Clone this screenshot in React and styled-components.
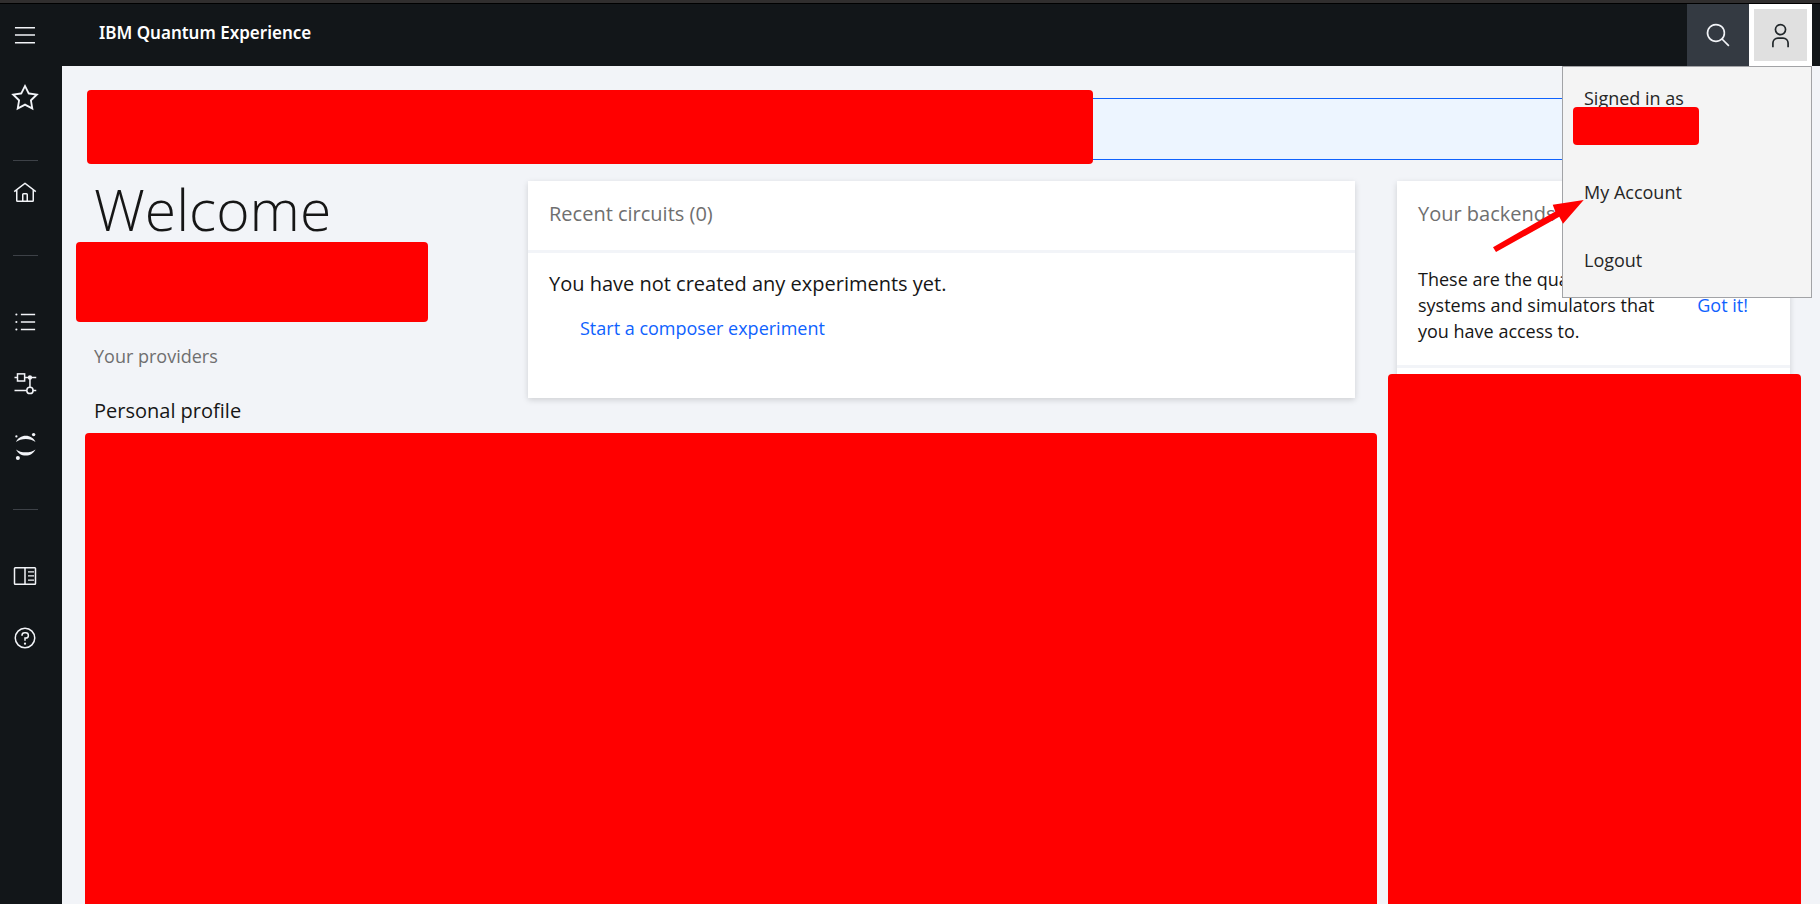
import React from 'react';
import styled, { createGlobalStyle } from 'styled-components';

const GlobalStyle = createGlobalStyle`
  *, *::before, *::after { box-sizing: border-box; }
  body {
    margin: 0;
    background: #f2f4f8;
    color: #161616;
    font-family: "Open Sans", "Noto Sans", sans-serif;
    font-size: 18px;
    line-height: 26px;
  }
  button { font: inherit; border: 0; cursor: pointer; }
  h1, h2, h3, p, ul { margin: 0; padding: 0; font-weight: 400; }
  ul { list-style: none; }
  a { text-decoration: none; }
`;

const Page = styled.div`
  display: flex;
  flex-direction: column;
  min-height: 100vh;
  border-top: 3px solid #302e2e;
`;

const Header = styled.header`
  display: flex;
  height: 63px;
  padding-right: 8px;
  border-top: 1px solid #000;
  background: #121619;
`;

const Title = styled.h1`
  flex: 1;
  padding: 16px 0 0 49px;
  color: #fff;
  font-family: "Noto Sans", sans-serif;
  font-size: 17px;
  font-weight: 600;
`;

const IconButton = styled.button`
  display: flex;
  align-items: center;
  justify-content: center;
  width: ${(p) => p.$width}px;
  height: 62px;
  padding: 0;
  color: #f2f4f8;
  background: ${(p) => p.$bg || 'transparent'};
`;

const UserButton = styled(IconButton)`
  border: 5px solid #fff;
  color: #21272a;
`;

const Account = styled.div`
  position: relative;
`;

const Menu = styled.div`
  position: absolute;
  z-index: 2;
  top: 100%;
  right: 0;
  width: 250px;
  padding-bottom: 3px;
  border: 1px solid #a2a3a6;
  background: #f4f4f4;
  color: #262626;
`;

const SignedIn = styled.div`
  height: 91px;
  padding: 18px 21px 0;
`;

const MenuLink = styled.a`
  display: block;
  padding: 21px;
  color: inherit;
`;

const Pointer = styled.svg`
  position: absolute;
  top: 131px;
  left: -71px;
  pointer-events: none;
`;

const Redaction = styled.div`
  border-radius: 4px;
  background: #ff0000;
`;

const UserRedaction = styled(Redaction)`
  position: relative;
  width: 126px;
  height: 38px;
  margin: -4px 0 0 -11px;
`;

const Body = styled.div`
  display: flex;
  flex: 1;
`;

const Sidebar = styled.nav`
  flex: none;
  width: 62px;
  background: #121619;
`;

const NavLink = styled.a`
  display: flex;
  align-items: center;
  justify-content: center;
  width: 50px;
  height: 62px;
  color: #f2f4f8;
`;

const Divider = styled.hr`
  width: 25px;
  height: 1px;
  margin: ${(p) => p.$above}px 0 ${(p) => p.$below}px 13px;
  border: 0;
  background: #3d4147;
`;

const Main = styled.main`
  display: flex;
  flex: 1;
  flex-direction: column;
  gap: 21px;
  min-width: 0;
  padding: 32px 30px 0 32px;
`;

const Notification = styled.div`
  position: relative;
  height: 62px;
  border: solid #0f62fe;
  border-width: 1px 0;
  background: #edf5ff;
`;

const BannerRedaction = styled(Redaction)`
  position: absolute;
  top: -9px;
  left: -7px;
  width: 1006px;
  max-width: 100%;
  height: 74px;
`;

const Dashboard = styled.div`
  display: grid;
  flex: 1;
  grid-template-columns: minmax(0, 1fr) 393px;
  gap: 42px;
`;

const Lead = styled.div`
  display: flex;
  flex-direction: column;
`;

const LeadRow = styled.div`
  display: grid;
  grid-template-columns: 434px minmax(0, 1fr);
  align-items: start;
  padding-bottom: 8px;
`;

const Welcome = styled.h2`
  font-size: 57px;
  font-weight: 300;
  line-height: 56px;
`;

const NameRedaction = styled(Redaction)`
  width: 352px;
  height: 80px;
  margin: 5px 0 21px -18px;
`;

const Label = styled.p`
  color: #6f6f6f;
`;

const LargeText = styled.p`
  font-size: 20px;
  line-height: 28px;
`;

const Profile = styled(LargeText)`
  margin-top: 28px;
`;

const ContentRedaction = styled(Redaction)`
  flex: 1;
  margin: 0 -22px 0 -9px;
  border-radius: 4px 4px 0 0;
`;

const Card = styled.section`
  display: flex;
  flex-direction: column;
  min-height: 217px;
  background: #fff;
  box-shadow: 0 2px 6px rgba(0, 0, 0, 0.15);
`;

const CardTitle = styled.h3`
  height: 69px;
  padding: 19px 21px 0;
  color: #6f6f6f;
  font-size: 20px;
  line-height: 28px;
`;

const CardBody = styled.div`
  padding: 17px 21px 0;
  border-top: 3px solid #f2f4f8;
`;

const ComposerLink = styled.a`
  display: inline-block;
  margin: 17px 0 0 31px;
  color: #0f62fe;
`;

const Hint = styled.div`
  display: flex;
  align-items: center;
  gap: 36px;
  padding: 16px 42px 21px 21px;
  border-bottom: 3px solid #f2f4f8;
`;

const HintText = styled.p`
  flex: 1;
`;

const TextButton = styled.button`
  flex: none;
  padding: 0;
  background: none;
  color: #0f62fe;
`;

const BackendRedaction = styled(Redaction)`
  flex: 1;
  margin: 6px -11px 0 -9px;
  border-radius: 4px 4px 0 0;
`;

const Glyph = styled.svg`
  flex: none;
  overflow: visible;
  fill: currentColor;
`;

const Icon = ({ size = 24, children }) => (
  <Glyph width={size} height={size} viewBox="0 0 32 32" aria-hidden="true">
    {children}
  </Glyph>
);

const MenuIcon = () => (
  <Icon>
    <path d="M2.600 5.300h26.700v2H2.600zM2.600 15h26.700v2H2.600zM2.600 25.300h26.700v2H2.600z" />
  </Icon>
);
const StarIcon = () => (
  <Icon size={30}>
    <path d="M16 6.52l2.76 5.58.46 1 1 .15 6.16.89-4.38 4.3-.75.73.18 1 1.05 6.13-5.51-2.89L16 23l-.93.49-5.51 2.85 1-6.13.18-1-.74-.77-4.42-4.3 6.16-.89 1-.15.46-1L16 6.52M16 2l-4.55 9.22-10.17 1.47 7.36 7.18L6.9 30l9.1-4.78L25.1 30l-1.74-10.13 7.36-7.17-10.17-1.48z" />
  </Icon>
);
const HomeIcon = () => (
  <Icon>
    <path d="M16.61 2.21a1.01 1.01 0 0 0-1.24 0L1 13.42l1.24 1.57L4 13.62V26a2 2 0 0 0 2 2h20a2 2 0 0 0 2-2V13.63L29.76 15 31 13.43zM18 26h-4v-8h4zm2 0v-8a2 2 0 0 0-2-2h-4a2 2 0 0 0-2 2v8H6V12.06l10-7.79 10 7.8V26z" />
  </Icon>
);
const ListIcon = () => (
  <Icon>
    <path d="M10.500 5h19v2h-19zM10.500 15h19v2h-19zM10.500 25h19v2h-19z" />
    <circle cx="4.500" cy="6" r="1.400" />
    <circle cx="4.500" cy="16" r="1.400" />
    <circle cx="4.500" cy="26" r="1.400" />
  </Icon>
);
const CircuitIcon = () => (
  <Icon>
    <g fill="none" stroke="currentColor" strokeWidth="2">
      <path d="M2 7.300h4M15 7.300h16M2 24.500h16.500M26 24.500h5M22.600 8v12.500" />
      <rect x="6" y="2.500" width="9.500" height="9.500" />
      <circle cx="22.600" cy="24.500" r="4.200" />
    </g>
    <circle cx="22.600" cy="7.300" r="2.900" />
  </Icon>
);
const JupyterIcon = () => (
  <Icon>
    <path d="M4 10.500C6.500 5.500 11.200 2.300 17 2.300s10.500 3.200 13 8.200C26.500 7.800 22 6.500 17 6.500S7.500 7.800 4 10.500z" />
    <path d="M4 20.500c3.500 2.500 8 3.800 13 3.800s9.500-1.300 13-3.800c-2.500 5-7.200 8.200-13 8.200S6.500 25.500 4 20.500z" />
    <circle cx="27.500" cy="0.800" r="2.300" />
    <circle cx="4.500" cy="3.300" r="1.500" />
    <circle cx="6.500" cy="32" r="2.700" />
  </Icon>
);
const DocsIcon = () => (
  <Icon>
    <path d="M20 9.500h8v1.800h-8zM20 15h8v1.800h-8zM20 20.500h8v1.800h-8z" />
    <path d="M29 4H3a2 2 0 0 0-2 2v20a2 2 0 0 0 2 2h26a2 2 0 0 0 2-2V6a2 2 0 0 0-2-2zM3 6h12v20H3zm14 20V6h12v20z" />
  </Icon>
);
const HelpIcon = () => (
  <Icon>
    <path d="M16 2a14 14 0 1 0 14 14A14 14 0 0 0 16 2zm0 26a12 12 0 1 1 12-12 12 12 0 0 1-12 12z" />
    <circle cx="16" cy="23.500" r="1.500" />
    <path d="M17 8h-1.500A4.490 4.490 0 0 0 11 12.490V13h2v-.5a2.500 2.500 0 0 1 2.500-2.500H17a2.500 2.500 0 0 1 0 5h-2v4.500h2V17a4.500 4.500 0 0 0 0-9z" />
  </Icon>
);
const SearchIcon = () => (
  <Icon size={27}>
    <path d="M29 27.590l-7.550-7.560a11.020 11.020 0 1 0-1.420 1.420L27.590 29zM4 13a9 9 0 1 1 9 9 9.010 9.010 0 0 1-9-9z" />
  </Icon>
);
const UserIcon = () => (
  <Icon size={27}>
    <path d="M16 4a5 5 0 1 1-5 5 5 5 0 0 1 5-5m0-2a7 7 0 1 0 7 7 7 7 0 0 0-7-7zM26 30h-2v-5a5 5 0 0 0-5-5h-6a5 5 0 0 0-5 5v5H6v-5a7 7 0 0 1 7-7h6a7 7 0 0 1 7 7z" />
  </Icon>
);

const AccountMenu = () => (
  <Menu>
    <SignedIn>
      Signed in as
      <UserRedaction />
    </SignedIn>
    <MenuLink href="#account">My Account</MenuLink>
    <MenuLink href="#logout">Logout</MenuLink>
    <Pointer width="94" height="56" viewBox="0 0 94 56" fill="#ff0000" aria-hidden="true">
      <path d="M1 49.300 63.300 13.500 60.700 6.700 91.700 2 71 25.700 67.300 18.700 4 54z" />
    </Pointer>
  </Menu>
);

export default function App() {
  return (
    <Page>
      <GlobalStyle />
      <Header>
        <IconButton $width={50} aria-label="Open menu"><MenuIcon /></IconButton>
        <Title>IBM Quantum Experience</Title>
        <IconButton $width={62} $bg="#343a42" aria-label="Search"><SearchIcon /></IconButton>
        <Account>
          <UserButton $width={63} $bg="#e0e0e0" aria-label="Account"><UserIcon /></UserButton>
          <AccountMenu />
        </Account>
      </Header>
      <Body>
        <Sidebar>
          <NavLink href="#favorites" aria-label="Favorites"><StarIcon /></NavLink>
          <Divider $above={32} $below={1} />
          <NavLink href="#home" aria-label="Home"><HomeIcon /></NavLink>
          <Divider $above={31} $below={35} />
          <NavLink href="#results" aria-label="Results"><ListIcon /></NavLink>
          <NavLink href="#composer" aria-label="Circuit composer"><CircuitIcon /></NavLink>
          <NavLink href="#notebooks" aria-label="Notebooks"><JupyterIcon /></NavLink>
          <Divider $above={32} $below={35} />
          <NavLink href="#docs" aria-label="Documentation"><DocsIcon /></NavLink>
          <NavLink href="#help" aria-label="Help"><HelpIcon /></NavLink>
        </Sidebar>
        <Main>
          <Notification>
            <BannerRedaction />
          </Notification>
          <Dashboard>
            <Lead>
              <LeadRow>
                <div>
                  <Welcome>Welcome</Welcome>
                  <NameRedaction />
                  <Label>Your providers</Label>
                  <Profile>Personal profile</Profile>
                </div>
                <Card>
                  <CardTitle>Recent circuits (0)</CardTitle>
                  <CardBody>
                    <LargeText>You have not created any experiments yet.</LargeText>
                    <ComposerLink href="#composer">Start a composer experiment</ComposerLink>
                  </CardBody>
                </Card>
              </LeadRow>
              <ContentRedaction />
            </Lead>
            <Card>
              <CardTitle>Your backends</CardTitle>
              <Hint>
                <HintText>These are the quantum systems and simulators that you have access to.</HintText>
                <TextButton>Got it!</TextButton>
              </Hint>
              <BackendRedaction />
            </Card>
          </Dashboard>
        </Main>
      </Body>
    </Page>
  );
}
